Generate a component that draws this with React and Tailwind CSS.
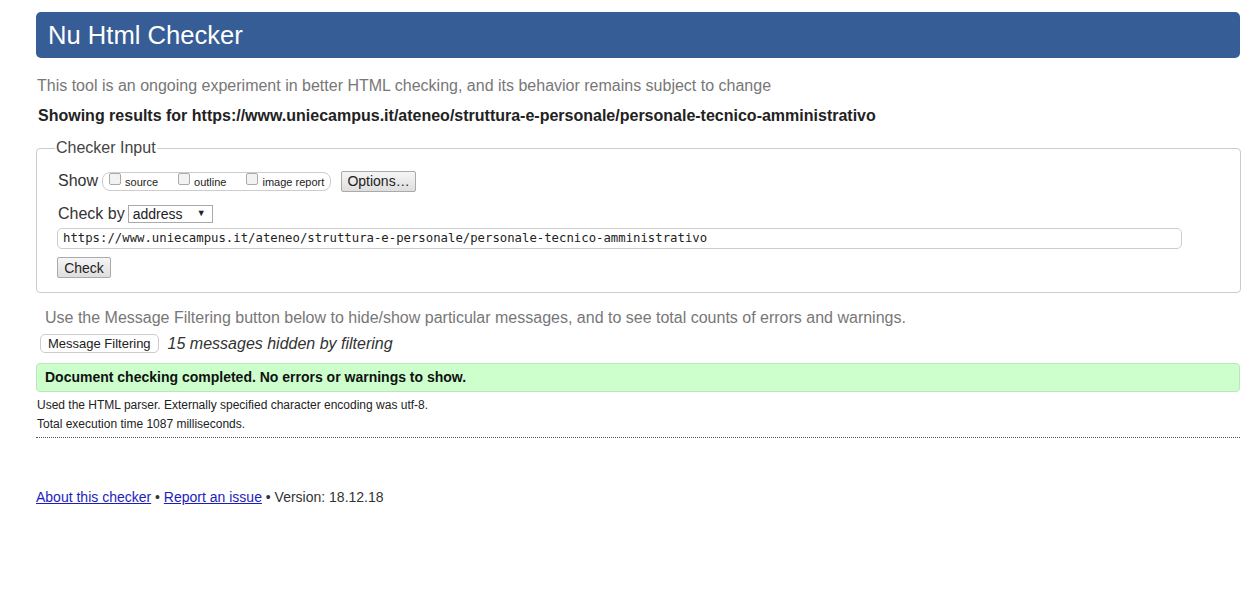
export default function App() {
  const ff = { fontFamily: '"Liberation Sans", Arial, sans-serif' };
  return (
    <div className="w-[1250px] h-[614px] bg-white text-[#222]" style={ff}>
      <div className="ml-[36px] w-[1204px] pt-[12px]">
        <div className="h-[46px] bg-[#365d95] rounded-[5px] flex items-center pl-[12px]">
          <h1 className="text-white text-[25.6px] leading-none mt-[1px]">Nu Html Checker</h1>
        </div>
        <p className="mt-[18px] ml-[1px] text-[16px] leading-[20px] text-[#777]">
          This tool is an ongoing experiment in better HTML checking, and its behavior remains subject to change
        </p>
        <p className="mt-[10px] ml-[2px] text-[16px] leading-[20px] font-bold text-[#222]">
          Showing results for https://www.uniecampus.it/ateneo/struttura-e-personale/personale-tecnico-amministrativo
        </p>
        <fieldset className="mt-[10px] border border-[#ccc] rounded-[4px] pl-[20px] pr-[58px] pb-[12px] pt-[4px]">
          <legend className="text-[16px] text-[#444] px-[1px] ml-[-2px]">Checker Input</legend>
          <div className="flex items-center mt-[6px] h-[22px]">
            <span className="text-[16px] text-[#333] ml-[1px]">Show</span>
            <div className="ml-[4px] h-[19px] w-[229px] border border-[#ccc] rounded-[8px] flex items-center pl-[6px] text-[11px] text-[#222]">
              <span className="w-[12px] h-[12px] border border-[#aaa] rounded-[2px] bg-[#f2f2f2] mb-[4px]"></span>
              <span className="ml-[4px] mt-[2px]">source</span>
              <span className="ml-[20px] w-[12px] h-[12px] border border-[#aaa] rounded-[2px] bg-[#f2f2f2] mb-[4px]"></span>
              <span className="ml-[4px] mt-[2px]">outline</span>
              <span className="ml-[20px] w-[12px] h-[12px] border border-[#aaa] rounded-[2px] bg-[#f2f2f2] mb-[4px]"></span>
              <span className="ml-[4px] mt-[2px]">image report</span>
            </div>
            <button className="ml-[10px] h-[21px] w-[75px] border border-[#aaa] rounded-[2px] bg-gradient-to-b from-[#f6f6f6] to-[#dedede] text-[14px] text-[#222] leading-none">
              Options…
            </button>
          </div>
          <div className="flex items-center mt-[12px] h-[20px]">
            <span className="text-[16px] text-[#333] ml-[1px]">Check by</span>
            <div className="ml-[3px] h-[18px] w-[85px] border border-[#aaa] bg-white flex items-center justify-between px-[4px] text-[14px] text-[#222]">
              <span>address</span>
              <span className="text-[9px] mr-[2px]">▼</span>
            </div>
          </div>
          <div className="mt-[4px] h-[21px] w-[1125px] border border-[#ccc] rounded-[5px] flex items-center pl-[5px] text-[12.3px] text-[#222]" style={{ fontFamily: '"DejaVu Sans Mono", "Liberation Mono", monospace' }}>
            https://www.uniecampus.it/ateneo/struttura-e-personale/personale-tecnico-amministrativo
          </div>
          <button className="mt-[8px] h-[21px] w-[54px] border border-[#aaa] rounded-[2px] bg-gradient-to-b from-[#f6f6f6] to-[#dedede] text-[14px] text-[#222] leading-none">
            Check
          </button>
        </fieldset>
        <p className="mt-[15px] ml-[9px] text-[16px] leading-[20px] text-[#777]">
          Use the Message Filtering button below to hide/show particular messages, and to see total counts of errors and warnings.
        </p>
        <div className="flex items-center mt-[6px] h-[20px]">
          <button className="ml-[4px] h-[19px] px-[7px] border border-[#ccc] rounded-[5px] bg-white text-[13px] text-[#222] leading-none">
            Message Filtering
          </button>
          <span className="ml-[9px] text-[16px] italic text-[#333]">15 messages hidden by filtering</span>
        </div>
        <div className="mt-[9px] h-[29px] bg-[#ccffcc] border border-[#bde5bd] rounded-[4px] flex items-center pl-[8px]">
          <span className="text-[14px] font-bold text-[#111]">Document checking completed. No errors or warnings to show.</span>
        </div>
        <p className="mt-[4px] ml-[1px] text-[12px] leading-[19px] text-[#222]">
          Used the HTML parser. Externally specified character encoding was utf-8.
        </p>
        <p className="ml-[1px] text-[12px] leading-[19px] text-[#222]">Total execution time 1087 milliseconds.</p>
        <div className="mt-[3px] border-t border-dotted border-[#555]"></div>
        <p className="mt-[49px] text-[14px] text-[#333]">
          <a href="#" className="text-[#1c1cc0] underline">About this checker</a>
          {' • '}
          <a href="#" className="text-[#1c1cc0] underline">Report an issue</a>
          {' • Version: 18.12.18'}
        </p>
      </div>
    </div>
  );
}
